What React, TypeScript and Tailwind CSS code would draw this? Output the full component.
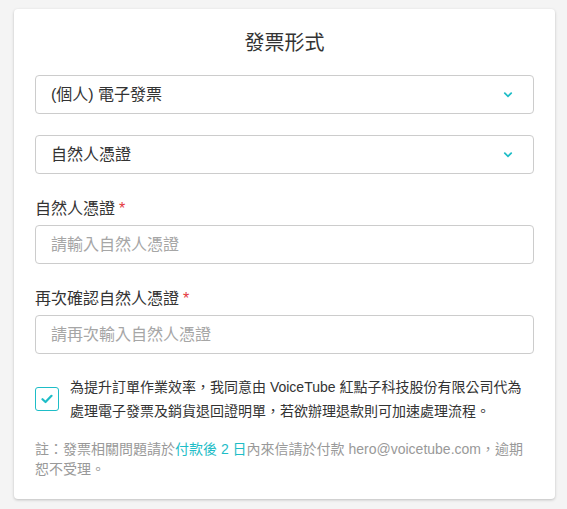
import { useState } from "react";

const font = { fontFamily: '"Liberation Sans", "Noto Sans CJK TC", sans-serif' };

function Chevron() {
  return (
    <svg width="10" height="6" viewBox="0 0 10 6" className="text-[#1ebdc7]">
      <path d="M1.8 1.2 L5 4.3 L8.2 1.2" fill="none" stroke="currentColor" strokeWidth="1.8" strokeLinecap="round" />
    </svg>
  );
}

function SelectBox({ value }: { value: string }) {
  return (
    <div className="h-[39px] rounded border border-[#cccccc] bg-white flex items-center justify-between pl-[15px] pr-[20px] text-[16px] text-[#333333]">
      <span>{value}</span>
      <Chevron />
    </div>
  );
}

function Field({ label, placeholder }: { label: string; placeholder: string }) {
  return (
    <div className="mt-[23px]">
      <div className="text-[16px] leading-[24px] text-[#333333]">
        {label}
        <span className="text-[#e4393c] ml-[4px]">*</span>
      </div>
      <input
        placeholder={placeholder}
        className="mt-[4px] block w-full h-[39px] rounded border border-[#cccccc] px-[15px] text-[16px] text-[#333333] placeholder:text-[#a6a6a6] outline-none"
        style={font}
      />
    </div>
  );
}

export default function App() {
  const [agree, setAgree] = useState(true);

  return (
    <div className="min-h-screen bg-[#f4f4f4] pt-[9px] pl-[14px]" style={font}>
      <div className="w-[541px] bg-white rounded-[4px] shadow-[0_1px_3px_rgba(0,0,0,0.22)] px-[21px] pt-[20px] pb-[20px]">
        <h2 className="text-center text-[20px] leading-[28px] text-[#333333]">發票形式</h2>
        <div className="mt-[18px]">
          <SelectBox value="(個人) 電子發票" />
        </div>
        <div className="mt-[21px]">
          <SelectBox value="自然人憑證" />
        </div>
        <Field label="自然人憑證" placeholder="請輸入自然人憑證" />
        <Field label="再次確認自然人憑證" placeholder="請再次輸入自然人憑證" />

        <div className="mt-[21px] flex items-center gap-[11px]">
          <button
            onClick={() => setAgree(!agree)}
            className="shrink-0 w-[24px] h-[24px] rounded-[3px] border-[1.5px] border-[#1ebdc7] flex items-center justify-center"
          >
            {agree && (
              <svg width="12" height="10" viewBox="0 0 12 10">
                <path d="M1.5 5.2 L4.5 8 L10.5 1.8" fill="none" stroke="#1ebdc7" strokeWidth="2.2" strokeLinecap="round" strokeLinejoin="round" />
              </svg>
            )}
          </button>
          <p className="text-[14px] leading-[24px] text-[#333333]">
            為提升訂單作業效率，我同意由 VoiceTube 紅點子科技股份有限公司代為處理電子發票及銷貨退回證明單，若欲辦理退款則可加速處理流程。
          </p>
        </div>

        <p className="mt-[16px] text-[14px] leading-[20px] text-[#999999]">
          註：發票相關問題請於<span className="text-[#1ebdc7]">付款後 2 日</span>內來信請於付款 hero@voicetube.com，逾期恕不受理。
        </p>
      </div>
    </div>
  );
}
